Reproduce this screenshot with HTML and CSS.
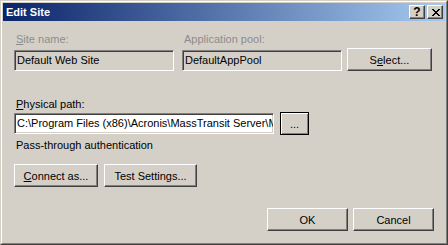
FILE: index.html
```html
<!DOCTYPE html>
<html lang="en">

<head>
    <meta charset="utf-8">
    <title>Edit Site</title>
    <link rel="stylesheet" href="styles.css">
</head>

<body>
    <div class="window">
        <div class="frame">

            <div class="caption">
                <span class="title">Edit Site</span>
                <span class="caption_btns">
                    <span class="cbtn help">?</span>
                    <span class="cbtn close">
                        <svg width="8" height="7" viewBox="0 0 8 7">
                            <path d="M0 0h2v1h-2zM6 0h2v1h-2zM1 1h2v1h-2zM5 1h2v1h-2zM2 2h4v1h-4zM3 3h2v1h-2zM2 4h4v1h-4zM1 5h2v1h-2zM5 5h2v1h-2zM0 6h2v1h-2zM6 6h2v1h-2z" fill="#000"/>
                        </svg>
                    </span>
                </span>
            </div>

            <div class="client">

                <div class="row top_row">
                    <div class="field site_field">
                        <label class="lbl disabled"><u>S</u>ite name:</label>
                        <div class="textbox readonly">Default Web Site</div>
                    </div>
                    <div class="field pool_field">
                        <label class="lbl disabled">Application pool:</label>
                        <div class="textbox readonly">DefaultAppPool</div>
                    </div>
                    <button class="btn select_btn">S<u>e</u>lect...</button>
                </div>

                <label class="lbl path_lbl"><u>P</u>hysical path:</label>
                <div class="row path_row">
                    <div class="textbox path_box">C:\Program Files (x86)\Acronis\MassTransit Server\M</div>
                    <button class="btn default_btn browse_btn">...</button>
                </div>

                <p class="lbl pass_lbl">Pass-through authentication</p>

                <div class="row btn_row">
                    <button class="btn connect_btn"><u>C</u>onnect as...</button>
                    <button class="btn test_btn">Test Settin<u>g</u>s...</button>
                </div>

                <div class="row dialog_row">
                    <button class="btn dialog_btn">OK</button>
                    <button class="btn dialog_btn">Cancel</button>
                </div>

            </div>
        </div>
    </div>
</body>

</html>
```

FILE: styles.css
```css
* {
    box-sizing: border-box;
    margin: 0;
    padding: 0;
}

body {
    background-color: #d4d0c8;
    font-family: "Liberation Sans", Arial, sans-serif;
    font-size: 11px;
    color: #000;
}

/* window frame, classic 3d edges */

.window {
    width: 448px;
    height: 245px;
    border: 1px solid;
    border-color: #d4d0c8 #404040 #404040 #d4d0c8;
    background-color: #d4d0c8;
}

.frame {
    height: 100%;
    border: 1px solid;
    border-color: #fff #808080 #808080 #fff;
    padding: 1px;
}

.caption {
    height: 18px;
    display: flex;
    align-items: center;
    justify-content: space-between;
    background: linear-gradient(to right, #0a246a, #a6caf0);
    padding: 0 2px 0 2px;
}

.title {
    color: #fff;
    font-weight: bold;
    font-size: 11px;
    padding-left: 1px;
}

.caption_btns {
    display: flex;
    gap: 2px;
}

.cbtn {
    width: 16px;
    height: 14px;
    display: flex;
    align-items: center;
    justify-content: center;
    background-color: #d4d0c8;
    border: 1px solid;
    border-color: #fff #404040 #404040 #fff;
    box-shadow: inset -1px -1px #808080;
    font-weight: bold;
    font-size: 12px;
    line-height: 12px;
}

.close svg {
    display: block;
    margin-left: 1px;
}

/* client area */

.client {
    display: flex;
    flex-direction: column;
    padding: 11px 11px 0 11px;
    margin-top: 1px;
}

.row {
    display: flex;
}

.lbl {
    display: block;
    height: 13px;
    line-height: 13px;
    padding-left: 2px;
}

.disabled {
    color: #8d8d8d;
}

.field {
    display: flex;
    flex-direction: column;
}

.field .lbl {
    margin-bottom: 4px;
}

.textbox {
    height: 21px;
    line-height: 17px;
    border: 1px solid;
    border-color: #808080 #fff #fff #808080;
    box-shadow: inset 1px 1px #404040, inset -1px -1px #d4d0c8;
    background-color: #fff;
    padding: 1px 0 0 2px;
    white-space: nowrap;
    overflow: hidden;
}

.readonly {
    background-color: #d4d0c8;
}

.top_row {
    align-items: flex-end;
}

.site_field {
    width: 160px;
}

.pool_field {
    width: 160px;
    margin-left: 8px;
}

.btn {
    height: 23px;
    font-family: "Liberation Sans", Arial, sans-serif;
    font-size: 11px;
    color: #000;
    background-color: #d4d0c8;
    border: 1px solid;
    border-color: #fff #404040 #404040 #fff;
    box-shadow: inset -1px -1px #808080;
    text-align: center;
}

.select_btn {
    width: 85px;
    margin-left: 5px;
}

.path_lbl {
    margin-top: 27px;
    margin-bottom: 1px;
}

.path_row {
    align-items: center;
}

.path_box {
    width: 260px;
}

.default_btn {
    border-color: #000;
    box-shadow: inset 1px 1px #fff, inset -1px -1px #808080;
}

.browse_btn {
    width: 29px;
    margin-left: 6px;
}

.pass_lbl {
    margin-top: 4px;
}

.btn_row {
    margin-top: 12px;
    gap: 6px;
}

.connect_btn {
    width: 84px;
}

.test_btn {
    width: 93px;
}

.dialog_row {
    margin-top: 21px;
    justify-content: flex-end;
    gap: 5px;
}

.dialog_btn {
    width: 81px;
}
```
